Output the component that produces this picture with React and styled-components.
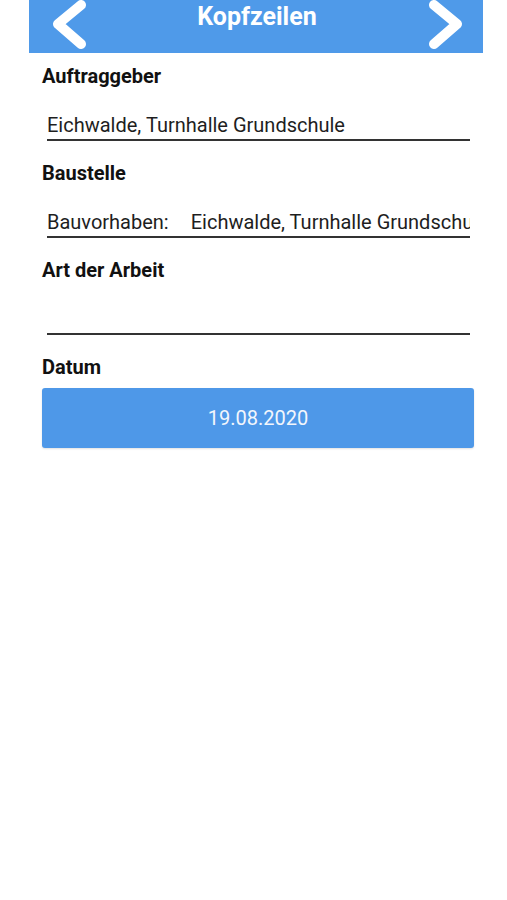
import React from 'react';
import styled, { createGlobalStyle } from 'styled-components';

const GlobalStyle = createGlobalStyle`
  body {
    margin: 0;
    background: #ffffff;
    font-family: Roboto, "Liberation Sans", sans-serif;
  }
`;

const Page = styled.div`
  width: 507px;
  min-height: 900px;
  background: #ffffff;
`;

const Header = styled.header`
  margin: 0 24px 0 29px;
  height: 53px;
  background: #4f9ae9;
  display: flex;
  align-items: flex-start;
  justify-content: space-between;
  padding: 0 19px 0 21px;
  box-sizing: border-box;
`;

const NavButton = styled.button`
  width: 36px;
  height: 50px;
  padding: 0;
  border: none;
  background: none;
  display: flex;
`;

const Title = styled.h1`
  margin: 0;
  padding-top: 2px;
  font-size: 25px;
  line-height: 30px;
  font-weight: 700;
  color: #ffffff;
`;

const Form = styled.main`
  padding: 11px 33px 0 42px;
  display: flex;
  flex-direction: column;
`;

const Field = styled.section`
  display: flex;
  flex-direction: column;
  margin-bottom: 20px;
`;

const Label = styled.div`
  font-size: 20px;
  line-height: 24px;
  font-weight: 700;
  color: #111111;
  margin-bottom: ${p => p.$tight ? '9px' : '13px'};
`;

const Input = styled.div`
  margin: 0 4px 0 5px;
  height: 40px;
  box-sizing: border-box;
  padding: 12px 0 2px 0;
  border-bottom: 2px solid #333333;
  font-size: 20px;
  line-height: 24px;
  color: #1e1e1e;
  white-space: nowrap;
  overflow: hidden;
`;

const Prefix = styled.span`
  margin-right: 22px;
`;

const DateButton = styled.button`
  height: 60px;
  border: none;
  border-radius: 3px;
  background: #4e98e8;
  color: #f2f6fc;
  font-family: Roboto, "Liberation Sans", sans-serif;
  font-size: 20px;
  box-shadow: 0 1px 2px rgba(0, 0, 0, 0.12);
`;

const Chevron = ({ dir }) => (
  <svg width="36" height="50" viewBox="0 0 36 50">
    <polyline
      points={dir === 'left' ? '31,5 8,24 31,44' : '6,5 29,24 6,44'}
      fill="none"
      stroke="#ffffff"
      strokeWidth="10"
      strokeLinecap="round"
      strokeLinejoin="round"
    />
  </svg>
);

export default function App() {
  return (
    <Page>
      <GlobalStyle />
      <Header>
        <NavButton><Chevron dir="left" /></NavButton>
        <Title>Kopfzeilen</Title>
        <NavButton><Chevron dir="right" /></NavButton>
      </Header>
      <Form>
        <Field>
          <Label>Auftraggeber</Label>
          <Input>Eichwalde, Turnhalle Grundschule</Input>
        </Field>
        <Field>
          <Label>Baustelle</Label>
          <Input><Prefix>Bauvorhaben:</Prefix>Eichwalde, Turnhalle Grundschule</Input>
        </Field>
        <Field>
          <Label>Art der Arbeit</Label>
          <Input />
        </Field>
        <Field>
          <Label $tight>Datum</Label>
          <DateButton>19.08.2020</DateButton>
        </Field>
      </Form>
    </Page>
  );
}
